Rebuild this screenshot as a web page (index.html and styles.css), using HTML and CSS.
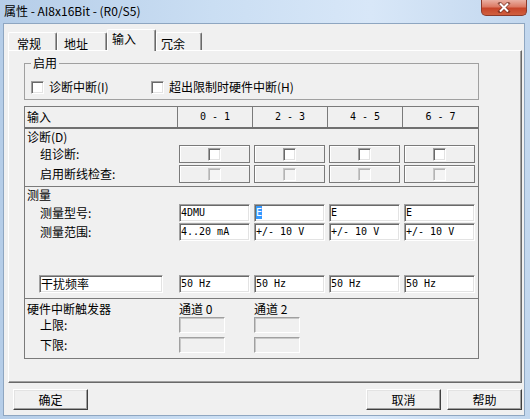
FILE: index.html
```html
<!DOCTYPE html>
<html>
<head>
  <meta charset="UTF-8">
  <title>属性 - AI8x16Bit - (R0/S5)</title>
  <link rel="stylesheet" href="styles.css">
</head>
<body>
  <div class="window">
    <div class="titlebar">
      <span class="title">属性 - AI8x16Bit - (R0/S5)</span>
      <span class="close">
        <svg width="14" height="11" viewBox="0 0 14 11">
          <path d="M3 1.5 L11 9.5 M11 1.5 L3 9.5" stroke="#5a2318" stroke-width="3.6" stroke-linecap="square" opacity="0.6"/>
          <path d="M3 1.5 L11 9.5 M11 1.5 L3 9.5" stroke="#fff" stroke-width="2"/>
        </svg>
      </span>
    </div>

    <div class="client">
      <div class="tabs">
        <div class="tab t1">常规</div>
        <div class="tab t2">地址</div>
        <div class="tab t3 active">输入</div>
        <div class="tab t4">冗余</div>
      </div>

      <div class="panel">
        <fieldset class="group">
          <legend>启用</legend>
          <div class="checks">
            <label class="check first"><span class="cb"></span>诊断中断(I)</label>
            <label class="check"><span class="cb"></span>超出限制时硬件中断(H)</label>
          </div>
        </fieldset>

        <div class="grid">
          <div class="row head">
            <div class="cell">输入</div>
            <div class="cell num">0 - 1</div>
            <div class="cell num">2 - 3</div>
            <div class="cell num">4 - 5</div>
            <div class="cell num">6 - 7</div>
          </div>

          <!-- 诊断 -->
          <div class="section diag">
            <div class="caption">诊断(D)</div>
            <div class="row">
              <div class="label">组诊断:</div>
              <div class="cell"><span class="cb-frame"><span class="cb"></span></span></div>
              <div class="cell"><span class="cb-frame"><span class="cb"></span></span></div>
              <div class="cell"><span class="cb-frame"><span class="cb"></span></span></div>
              <div class="cell"><span class="cb-frame"><span class="cb"></span></span></div>
            </div>
            <div class="row">
              <div class="label">启用断线检查:</div>
              <div class="cell"><span class="cb-frame"><span class="cb off"></span></span></div>
              <div class="cell"><span class="cb-frame"><span class="cb off"></span></span></div>
              <div class="cell"><span class="cb-frame"><span class="cb off"></span></span></div>
              <div class="cell"><span class="cb-frame"><span class="cb off"></span></span></div>
            </div>
          </div>

          <!-- 测量 -->
          <div class="section measure">
            <div class="caption">测量</div>
            <div class="row">
              <div class="label">测量型号:</div>
              <div class="cell"><span class="field">4DMU</span></div>
              <div class="cell"><span class="field"><span class="sel">E</span></span></div>
              <div class="cell"><span class="field">E</span></div>
              <div class="cell"><span class="field">E</span></div>
            </div>
            <div class="row">
              <div class="label">测量范围:</div>
              <div class="cell"><span class="field">4..20 mA</span></div>
              <div class="cell"><span class="field">+/- 10 V</span></div>
              <div class="cell"><span class="field">+/- 10 V</span></div>
              <div class="cell"><span class="field">+/- 10 V</span></div>
            </div>
            <div class="row noise">
              <div class="cell"><span class="field wide">干扰频率</span></div>
              <div class="cell"><span class="field">50 Hz</span></div>
              <div class="cell"><span class="field">50 Hz</span></div>
              <div class="cell"><span class="field">50 Hz</span></div>
              <div class="cell"><span class="field">50 Hz</span></div>
            </div>
          </div>

          <!-- 硬件中断 -->
          <div class="section hw">
            <div class="row hw-head">
              <div class="caption">硬件中断触发器</div>
              <div class="channel">通道 0</div>
              <div class="channel">通道 2</div>
            </div>
            <div class="row limit">
              <div class="label">上限:</div>
              <div class="cell"><span class="off-box"></span></div>
              <div class="cell"><span class="off-box"></span></div>
            </div>
            <div class="row limit">
              <div class="label">下限:</div>
              <div class="cell"><span class="off-box"></span></div>
              <div class="cell"><span class="off-box"></span></div>
            </div>
          </div>
        </div>
      </div>

      <div class="buttons">
        <button class="btn">确定</button>
        <div class="btn-group">
          <button class="btn">取消</button>
          <button class="btn">帮助</button>
        </div>
      </div>
    </div>
  </div>
</body>
</html>
```

FILE: styles.css
```css
* {
  margin: 0;
  padding: 0;
  box-sizing: border-box;
}

body {
  width: 530px;
  height: 419px;
  overflow: hidden;
  font-family: "Noto Sans CJK SC", sans-serif;
  font-size: 12px;
  color: #000;
  background: #c4d8ee;
}

/* 窗口外框 */
.window {
  height: 419px;
  display: flex;
  flex-direction: column;
  padding: 0 5px 3px 3px;
  background: linear-gradient(90deg, #b5cde8 0%, #cadef3 40%, #d8e7f8 70%, #c2d7ee 100%);
}

.titlebar {
  height: 23px;
  display: flex;
  justify-content: space-between;
  align-items: flex-start;
  flex-shrink: 0;
}

.title {
  line-height: 21px;
  padding-left: 1px;
}

.close {
  width: 46px;
  height: 16px;
  margin-right: -2px;
  display: flex;
  align-items: center;
  justify-content: center;
  border: 1px solid #8b3a2b;
  border-top: none;
  border-radius: 0 0 5px 5px;
  background: linear-gradient(#eab0a3 0%, #dc7a64 45%, #c7452a 55%, #d0603f 100%);
}

/* 客户区 */
.client {
  flex: 1;
  display: flex;
  flex-direction: column;
  background: #f0f0f0;
  border: 1px solid #8ea6c1;
  padding: 5px 2px 0 4px;
}

/* 选项卡 */
.tabs {
  height: 21px;
  display: flex;
  align-items: flex-end;
  position: relative;
  z-index: 1;
}

.tab {
  height: 18px;
  line-height: 14px;
  padding-top: 4px;
  background: #f0f0f0;
  border-top: 1px solid #fff;
  border-left: 1px solid #fff;
  border-right: 1px solid #696969;
  box-shadow: inset -1px 0 #a0a0a0;
  border-radius: 2px 2px 0 0;
}

.t1 { width: 49px; padding-left: 8px; }
.t2 { width: 50px; padding-left: 6px; }
.t3 { width: 49px; padding-left: 4px; }
.t4 { width: 46px; padding-left: 4px; }

.tab.active {
  height: 22px;
  margin-bottom: -1px;
  padding-top: 2px;
}

/* 选项卡内容 */
.panel {
  height: 333px;
  border: 1px solid;
  border-color: #fff #696969 #696969 #fff;
  box-shadow: inset -1px -1px #a0a0a0;
  padding: 4px 0 0 15px;
}

.group {
  width: 455px;
  border: 1px solid #a0a0a0;
  padding: 8px 6px 4px 6px;
}

.group legend {
  padding: 0 2px;
  line-height: 16px;
}

.checks {
  display: flex;
  height: 16px;
  align-items: center;
}

.check {
  display: flex;
  align-items: center;
  gap: 5px;
  line-height: 16px;
  white-space: nowrap;
}

.check.first {
  width: 120px;
}

.cb {
  display: block;
  width: 13px;
  height: 13px;
  background: #fff;
  border: 1px solid;
  border-color: #a0a0a0 #fff #fff #a0a0a0;
  box-shadow: inset 1px 1px #696969, inset -1px -1px #e3e3e3;
}

.cb.off {
  background: #f4f4f4;
  border-color: #c8c8c8 #fff #fff #c8c8c8;
  box-shadow: inset 1px 1px #b4b4b4;
}

/* 通道表 */
.grid {
  width: 455px;
  margin-top: 6px;
  border: 1px solid #7a7a7a;
}

.row {
  display: grid;
  grid-template-columns: 152px 75px 75px 75px 76px;
}

.head {
  height: 22px;
  border-bottom: 2px solid #707070;
}

.head .cell {
  line-height: 20px;
  padding-left: 2px;
}

.head .num {
  justify-content: center;
  border-left: 1px solid #7a7a7a;
  padding-left: 0;
  font-family: "DejaVu Sans Mono", monospace;
  font-size: 10px;
}

.section {
  border-bottom: 1px solid #7a7a7a;
}

.section:last-child {
  border-bottom: none;
}

.caption {
  padding-left: 2px;
  line-height: 16px;
  white-space: nowrap;
}

.label {
  padding-left: 15px;
  white-space: nowrap;
}

.cell {
  display: flex;
  align-items: flex-start;
}

/* 诊断 */
.diag {
  padding-bottom: 3px;
}

.diag .caption {
  line-height: 15px;
}

.diag .row {
  height: 18px;
  margin-top: 1px;
  line-height: 18px;
}

.diag .row + .row {
  margin-top: 2px;
}

.cb-frame {
  width: 71px;
  height: 18px;
  margin-left: 2px;
  display: flex;
  align-items: center;
  justify-content: center;
  border: 1px solid #7a7a7a;
  box-shadow: inset 1px 1px #fff;
}

/* 测量 */
.measure {
  padding-bottom: 5px;
}

.measure .row {
  height: 18px;
  margin-top: 1px;
  line-height: 18px;
}

.measure .noise {
  margin-top: 34px;
}

.field {
  display: block;
  width: 71px;
  height: 18px;
  margin-left: 2px;
  padding-left: 1px;
  background: #fff;
  border: 1px solid;
  border-color: #a0a0a0 #fff #fff #a0a0a0;
  box-shadow: inset 1px 1px #696969, inset -1px -1px #e3e3e3;
  font-family: "DejaVu Sans Mono", monospace;
  font-size: 10px;
  line-height: 16px;
  white-space: nowrap;
  overflow: hidden;
}

.field.wide {
  width: 124px;
  margin-left: 14px;
  font-family: "Noto Sans CJK SC", sans-serif;
  font-size: 12px;
}

.sel {
  display: inline-block;
  line-height: 13px;
  margin-top: 1px;
  vertical-align: top;
  background: #3399ff;
  color: #fff;
}

/* 硬件中断 */
.hw {
  padding-bottom: 5px;
}

.hw-head {
  height: 18px;
}

.hw-head .caption {
  padding-top: 2px;
  line-height: 15px;
}

.channel {
  padding: 3px 0 0 2px;
  line-height: 14px;
  white-space: nowrap;
}

.limit {
  height: 16px;
  line-height: 16px;
}

.limit + .limit {
  margin-top: 4px;
}

.off-box {
  display: block;
  width: 46px;
  height: 16px;
  margin-left: 2px;
  background: #f0f0f0;
  border: 1px solid;
  border-color: #a0a0a0 #fff #fff #a0a0a0;
  box-shadow: inset 1px 1px #c8c8c8;
}

/* 底部按钮 */
.buttons {
  display: flex;
  justify-content: space-between;
  margin-top: 6px;
  padding-left: 5px;
}

.btn-group {
  display: flex;
  gap: 6px;
}

.btn {
  width: 75px;
  height: 21px;
  font-family: inherit;
  font-size: 12px;
  line-height: 19px;
  color: #000;
  background: #f0f0f0;
  border: 1px solid;
  border-color: #fff #404040 #404040 #fff;
  box-shadow: inset -1px -1px #a0a0a0, inset 1px 1px #e3e3e3;
}
```
